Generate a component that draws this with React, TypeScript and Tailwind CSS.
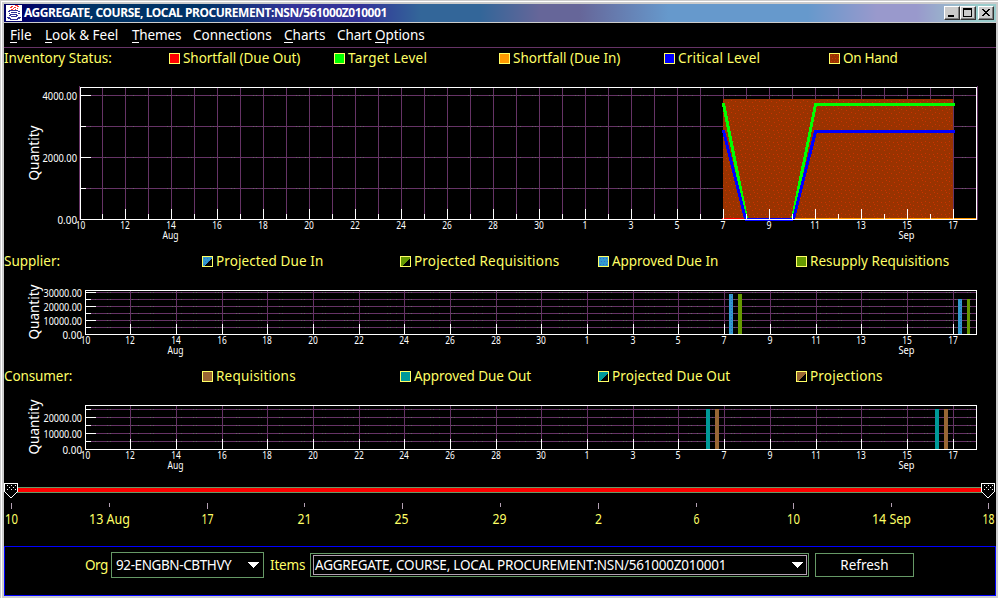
import type { ReactNode } from "react";

const GRID = "#663366";
const GRID_DOT = "#666666";
const SMALL = { fontFamily: "'Noto Sans', sans-serif", fontSize: 10, fontWeight: 400, fill: "#ffffff" } as const;

const DAY_LABELS = [
  "10", "12", "14", "16", "18", "20", "22", "24", "26", "28",
  "30", "1", "3", "5", "7", "9", "11", "13", "15", "17",
];

function SmallText({ x, y, w, anchor = "middle", children }: { x: number; y: number; w: number; anchor?: "middle" | "end"; children: string }) {
  const left = anchor === "middle" ? x - w / 2 : x - w;
  return (
    <text x={left} y={y} textLength={w} lengthAdjust="spacingAndGlyphs" {...SMALL}>
      {children}
    </text>
  );
}

function VLine({ x, y1, y2, color = "#fff" }: { x: number; y1: number; y2: number; color?: string }) {
  return <rect x={x} y={y1} width={1} height={y2 - y1} fill={color} />;
}

function HLine({ x1, x2, y, color = "#fff" }: { x1: number; x2: number; y: number; color?: string }) {
  return <rect x={x1} y={y} width={x2 - x1} height={1} fill={color} />;
}

function GridH({ x1, x2, y }: { x1: number; x2: number; y: number }) {
  return (
    <g>
      <HLine x1={x1} x2={x2} y={y} color={GRID} />
      <line x1={x1} x2={x2} y1={y + 0.5} y2={y + 0.5} stroke={GRID_DOT} strokeDasharray="1 2 1 5 1 11 1 2 1 18" />
    </g>
  );
}

function Quantity({ y }: { y: number }) {
  return (
    <text
      transform={`translate(38.5 ${y}) rotate(-90)`}
      textLength={55}
      fontFamily="'Noto Sans', sans-serif"
      fontSize={13.5}
      fontWeight={400}
      fill="#fff"
    >
      Quantity
    </text>
  );
}

interface ChartProps {
  left: number;
  top: number;
  bottom: number;
  svgTop: number;
  svgHeight: number;
  step: number;
  origin: number;
  grid: number[];
  majors: { y: number; label: string; labelY: number; w: number }[];
  quantityY: number;
  minor?: boolean;
  children: ReactNode;
}

function Chart({ left, top, bottom, svgTop, svgHeight, step, origin, grid, majors, quantityY, minor, children }: ChartProps) {
  const at = (k: number) => Math.floor(origin + step * k);
  const days = Array.from({ length: 38 }, (_, i) => i + 1);
  const shown = days.filter((k) => minor || k % 2 === 0);
  const majorYs = majors.map((m) => m.y);
  return (
    <svg width={992} height={svgHeight} viewBox={`4 ${svgTop} 992 ${svgHeight}`} className="block shrink-0" shapeRendering="crispEdges">
      {grid.map((y) => (
        <GridH key={y} x1={left + 1} x2={976} y={y} />
      ))}
      {shown.map((k) => (
        <VLine key={k} x={at(k)} y1={top + 1} y2={bottom} color={GRID} />
      ))}
      {minor && (
        <g fill={GRID}>
          <rect x={left - 1} y={top - 1} width={1} height={bottom - top + 2} />
          <rect x={977} y={top - 1} width={1} height={bottom - top + 2} />
        </g>
      )}
      {children}
      {grid.map((y) => (
        <HLine key={y} x1={left} x2={left + (majorYs.includes(y) ? 11 : 6)} y={y} />
      ))}
      {shown.map((k) => (
        <VLine key={k} x={at(k)} y1={bottom - (k % 2 === 0 ? 10 : 5)} y2={bottom} />
      ))}
      <rect x={left + 0.5} y={top + 0.5} width={976 - left} height={bottom - top} fill="none" stroke="#fff" />
      {majors.map((m) => (
        <SmallText key={m.label} x={left === 80 ? 77 : 82} y={m.labelY} w={m.w} anchor="end">
          {m.label}
        </SmallText>
      ))}
      {DAY_LABELS.map((d, i) => (
        <SmallText key={i} x={i === 0 ? left + 0.5 : at(i * 2)} y={bottom + 10} w={d.length === 2 ? 9.6 : 5}>
          {d}
        </SmallText>
      ))}
      <SmallText x={at(4) - 0.5} y={bottom + 20} w={16}>Aug</SmallText>
      <SmallText x={at(36) - 0.5} y={bottom + 20} w={16}>Sep</SmallText>
      <Quantity y={quantityY} />
    </svg>
  );
}

function Swatch({ color, half, dots }: { color: string; half?: boolean; dots?: string }) {
  return (
    <svg width={11} height={11} viewBox="0 0 11 11" className="block shrink-0" shapeRendering="crispEdges">
      <rect width={11} height={11} fill="#ffff66" />
      <rect x={1} y={1} width={9} height={9} fill={color} />
      {dots && (
        <g stroke={dots} strokeDasharray="1 2">
          <path d="M2 2.5h8M3 5.5h7M2 8.5h8" />
        </g>
      )}
      {half && <path d="M10 2v8H2z" fill="#000" />}
    </svg>
  );
}

interface Item { label: string; color: string; track: string; half?: boolean; dots?: string }

function LegendRow({ title, track, items, cell, height }: { title: string; track: string; items: Item[]; cell: string; height: string }) {
  return (
    <div className={`flex ${height} shrink-0 items-center text-[#ffff66]`}>
      <div className={`${cell} shrink-0 ${track}`}>{title}</div>
      {items.map((it) => (
        <div key={it.label} className={`flex ${cell} shrink-0 items-center gap-[3px]`}>
          <Swatch color={it.color} half={it.half} dots={it.dots} />
          <span className={it.track}>{it.label}</span>
        </div>
      ))}
    </div>
  );
}

const inventory: Item[] = [
  { label: "Shortfall (Due Out)", color: "#ff0000", track: "tracking-[-0.05px]" },
  { label: "Target Level", color: "#00ff00", track: "tracking-[0.25px]" },
  { label: "Shortfall (Due In)", color: "#ff9900", track: "tracking-[0px]" },
  { label: "Critical Level", color: "#0000ff", track: "tracking-[0.2px]" },
  { label: "On Hand", color: "#993300", track: "tracking-[-0.3px]", dots: "#cc3300" },
];
const supplier: Item[] = [
  { label: "Projected Due In", color: "#3399cc", track: "tracking-[0.1px]", half: true, dots: "#3366cc" },
  { label: "Projected Requisitions", color: "#669900", track: "tracking-[0.2px]", half: true },
  { label: "Approved Due In", color: "#3399cc", track: "tracking-[-0.05px]", dots: "#3366cc" },
  { label: "Resupply Requisitions", color: "#669900", track: "tracking-[0.02px]" },
];
const consumer: Item[] = [
  { label: "Requisitions", color: "#996633", track: "tracking-[0.2px]" },
  { label: "Approved Due Out", color: "#009999", track: "tracking-[-0.05px]" },
  { label: "Projected Due Out", color: "#009999", track: "tracking-[0.1px]", half: true },
  { label: "Projections", color: "#996633", track: "tracking-[0.2px]", half: true },
];

function JavaIcon() {
  return (
    <svg width={16} height={16} viewBox="0 0 16 16" className="block shrink-0" shapeRendering="crispEdges">
      <rect width={16} height={16} fill="#fff" />
      <path d="M5 1.5h2M9 .5h3M4 2.5h2M8 2.5h2M11 1.5h2M5 4.5h2M9 4.5h1M11 3.5h1M7 3.5h1" stroke="#ff3333" />
      <path d="M3 5.5h9M2 6.5h2M12 6.5h2M3 8.5h1M5 7.5h6M12 8.5h2M4 9.5h7M3 10.5h2M10 10.5h2M5 11.5h6M1 12.5h3M12 12.5h3M2 13.5h3M11 13.5h3M4 14.5h8" stroke="#333399" />
    </svg>
  );
}

function WinButton({ children }: { children: ReactNode }) {
  return (
    <div className="h-[14px] w-4 border border-t-white border-r-[#333333] border-b-[#333333] border-l-white bg-[#cccccc]">
      <svg width={14} height={12} viewBox="1 1 14 12" className="block" shapeRendering="crispEdges">
        <path d="M14.5 1v12M1 12.5h14" stroke="#808080" />
        {children}
      </svg>
    </div>
  );
}

const menus = [
  { pre: "", key: "F", post: "ile", box: "w-[35px] tracking-[0px]" },
  { pre: "", key: "L", post: "ook & Feel", box: "w-[87px] tracking-[0px]" },
  { pre: "", key: "T", post: "hemes", box: "w-[61px] tracking-[-0.15px]" },
  { pre: "Connections", key: "", post: "", box: "w-[91px] tracking-[-0.02px]" },
  { pre: "", key: "C", post: "harts", box: "w-[53px] tracking-[0px]" },
  { pre: "Chart ", key: "O", post: "ptions", box: "w-[90px] tracking-[-0.08px]" },
];

const sliderTicks: [number, string, number][] = [
  [11, "10", 13], [109, "13 Aug", 41], [207, "17", 12], [304, "21", 14], [401, "25", 14], [499, "29", 14],
  [598, "2", 7], [696, "6", 6], [793, "10", 13], [891, "14 Sep", 39], [988, "18", 12],
];

function Thumb({ x }: { x: number }) {
  return (
    <g transform={`translate(${x} 483)`}>
      <path d="M0.5 0.5h13v8l-6.5 6.5l-6.5 -6.5z" fill="#000" stroke="#fff" />
      <path d="M3 2.5h1M7 2.5h1M11 2.5h1M5 4.5h1M9 4.5h1M3 6.5h1M7 6.5h1M11 6.5h1" stroke="#fff" />
    </g>
  );
}

function TimeSlider() {
  return (
    <svg width={992} height={65} viewBox="4 481 992 65" className="block shrink-0" shapeRendering="crispEdges">
      <rect x={12} y={487} width={976} height={6} fill="#669966" />
      <rect x={12} y={488} width={976} height={4} fill="#ff0000" />
      <Thumb x={4} />
      <Thumb x={981} />
      {sliderTicks.map(([x, label, w], i) => (
        <g key={i}>
          <rect x={x === 401 || x === 499 ? x + 1 : x} y={503} width={1} height={i % 2 ? 4 : 6} fill="#b3a0b3" />
          <text x={x + 0.5 - w / 2} y={524} textLength={w} lengthAdjust="spacingAndGlyphs" fontFamily="'Noto Sans', sans-serif" fontSize={13.5} fontWeight={400} fill="#ffff66">
            {label}
          </text>
        </g>
      ))}
    </svg>
  );
}

function Arrow() {
  return (
    <svg width={11} height={6} viewBox="0 0 11 6" className="block shrink-0" shapeRendering="crispEdges">
      <path d="M0 .5h11M1 1.5h9M2 2.5h7M3 3.5h5M4 4.5h3M5 5.5h1" stroke="#fff" />
    </svg>
  );
}

export default function App() {
  return (
    <div className="flex h-[598px] w-[998px] flex-col overflow-hidden bg-[#cccccc] font-['Noto_Sans',sans-serif] text-[13.5px] leading-[18px] font-normal whitespace-pre text-white">
      <div className="h-px shrink-0 bg-[#cccccc]" />
      <div className="ml-px flex h-[597px] border-t border-l border-white pt-[2px] pb-[2px] pl-[2px]">
        <div className="flex w-[992px] shrink-0 flex-col">
          <div className="flex h-[18px] shrink-0 items-center bg-[linear-gradient(90deg,#000066_0%,#000066_2%,#003366_8%,#003366_20%,#333399_29%,#333399_36%,#336699_42%,#336699_48%,#666699_54%,#666699_58%,#6699cc_67%,#6699cc_81%,#9999cc_88%,#9999cc_92%,#99cccc_98%)] pr-[2px] pl-[2px]">
            <JavaIcon />
            <span className="ml-[2px] flex-1 text-[12px] font-bold tracking-[-0.44px]">
              AGGREGATE, COURSE, LOCAL PROCUREMENT:NSN/561000Z010001
            </span>
            <WinButton>
              <path d="M4 10h6" stroke="#000" strokeWidth={2} />
            </WinButton>
            <WinButton>
              <path d="M3.5 2v9M11.5 2v9M3 10.5h9" stroke="#000" strokeWidth={1} />
              <rect x={3} y={2} width={9} height={2} fill="#000" />
            </WinButton>
            <div className="ml-[2px]">
              <WinButton>
                <path d="M4 3h2v1h1v1h2v-1h1v-1h2v1h-1v1h-1v1h-1v1h1v1h1v1h1v1h-2v-1h-1v-1h-2v1h-1v1h-2v-1h1v-1h1v-1h1v-1h-1v-1h-1v-1h-1z" fill="#000" />
              </WinButton>
            </div>
          </div>
          <div className="h-px shrink-0 bg-[#cccccc]" />

          <div className="flex min-h-0 flex-1 flex-col bg-black">
            <div className="flex h-[25px] shrink-0 items-center border-b border-[#663366] pl-[6px]">
              {menus.map((m) => (
                <div key={m.key + m.pre} className={m.box}>
                  {m.pre}
                  {m.key && <span className="inline-block h-[17px] border-b border-white leading-[18px]">{m.key}</span>}
                  {m.post}
                </div>
              ))}
            </div>

            <LegendRow title="Inventory Status:" track="tracking-[0px]" items={inventory} cell="w-[165px]" height="h-[20px]" />
            <Chart
              left={80} top={87} bottom={219} svgTop={68} svgHeight={182} step={23} origin={79} minor
              grid={[95, 126, 157, 188]} quantityY={180.5}
              majors={[
                { y: 95, label: "4000.00", labelY: 100, w: 34.5 },
                { y: 157, label: "2000.00", labelY: 162, w: 34.5 },
                { y: 219, label: "0.00", labelY: 224, w: 19.5 },
              ]}
            >
              <defs>
                <pattern id="rust" width={12} height={12} patternUnits="userSpaceOnUse">
                  <rect width={12} height={12} fill="#993300" />
                  <path d="M1 1.5h1M6 2.5h1M10 0.5h1M3 5.5h1M8 6.5h1M11 4.5h1M1 9.5h1M5 10.5h1M9 10.5h1" stroke="#cc3300" />
                </pattern>
              </defs>
              <rect x={723} y={99} width={231} height={120} fill="url(#rust)" />
              <rect x={953} y={99} width={1} height={120} fill={GRID} />
              <rect x={722} y={218} width={24} height={1} fill="#ff0000" />
              <rect x={793} y={218} width={183} height={1} fill="#ff9900" />
              <path d="M723.5 103v1L746.5 219M792.5 219L815.5 104.5H955" fill="none" stroke="#00ff00" strokeWidth={3} />
              <path d="M723.5 130v1L745.5 219M793.5 219L815.5 131.5H955M745 219.5H793" fill="none" stroke="#0000ff" strokeWidth={3} />
            </Chart>

            <LegendRow title="Supplier:" track="tracking-[0px]" items={supplier} cell="w-[198px]" height="h-[22px]" />
            <Chart
              left={85} top={290} bottom={334} svgTop={272} svgHeight={93} step={22.846} origin={85}
              grid={[292, 299, 306, 313, 320, 327]} quantityY={339.5}
              majors={[
                { y: 292, label: "30000.00", labelY: 297, w: 38.5 },
                { y: 306, label: "20000.00", labelY: 311, w: 38.5 },
                { y: 320, label: "10000.00", labelY: 325, w: 38.5 },
                { y: 334, label: "0.00", labelY: 339, w: 19.5 },
              ]}
            >
              <rect x={729} y={294} width={4} height={40} fill="#3399cc" />
              <path d="M731.5 295v39" stroke="#3366cc" strokeDasharray="1 2" />
              <rect x={738} y={294} width={4} height={40} fill="#669900" />
              <rect x={958} y={299} width={4} height={35} fill="#3399cc" />
              <path d="M960.5 300v34" stroke="#3366cc" strokeDasharray="1 2" />
              <rect x={967} y={299} width={3} height={35} fill="#669900" />
            </Chart>

            <LegendRow title="Consumer:" track="tracking-[-0.1px]" items={consumer} cell="w-[198px]" height="h-[22px]" />
            <Chart
              left={85} top={405} bottom={449} svgTop={387} svgHeight={94} step={22.846} origin={85}
              grid={[409, 417, 425, 433, 441]} quantityY={454.5}
              majors={[
                { y: 417, label: "20000.00", labelY: 422, w: 38.5 },
                { y: 433, label: "10000.00", labelY: 438, w: 38.5 },
                { y: 449, label: "0.00", labelY: 454, w: 19.5 },
              ]}
            >
              <rect x={706} y={409} width={4} height={40} fill="#009999" />
              <rect x={715} y={409} width={4} height={40} fill="#996633" />
              <rect x={935} y={409} width={4} height={40} fill="#009999" />
              <rect x={944} y={409} width={4} height={40} fill="#996633" />
            </Chart>

            <TimeSlider />

            <div className="flex h-[50px] shrink-0 items-start border border-[#0000ff] pt-[5px] pl-20">
              <span className="mt-[4px] w-[26px] tracking-[-0.5px] text-[#ffff66]">Org</span>
              <div className="flex h-[26px] w-[153px] items-center justify-between border border-[#669966] pr-[4px] pl-[4px]">
                <span className="tracking-[-0.4px]">92-ENGBN-CBTHVY</span>
                <Arrow />
              </div>
              <span className="mt-[4px] ml-[6px] w-10 tracking-[-0.2px] text-[#ffff66]">Items</span>
              <div className="mt-px h-6 w-[499px] border border-[#669966] p-px pl-[2px]">
                <div className="flex h-5 items-center justify-between border border-[#b3a0b3] pr-[3px] pl-px">
                  <span className="tracking-[-0.23px]">AGGREGATE, COURSE, LOCAL PROCUREMENT:NSN/561000Z010001</span>
                  <Arrow />
                </div>
              </div>
              <div className="mt-px ml-[6px] flex h-6 w-[99px] items-center justify-center border border-[#669966]">Refresh</div>
            </div>
          </div>
        </div>
      </div>
    </div>
  );
}
